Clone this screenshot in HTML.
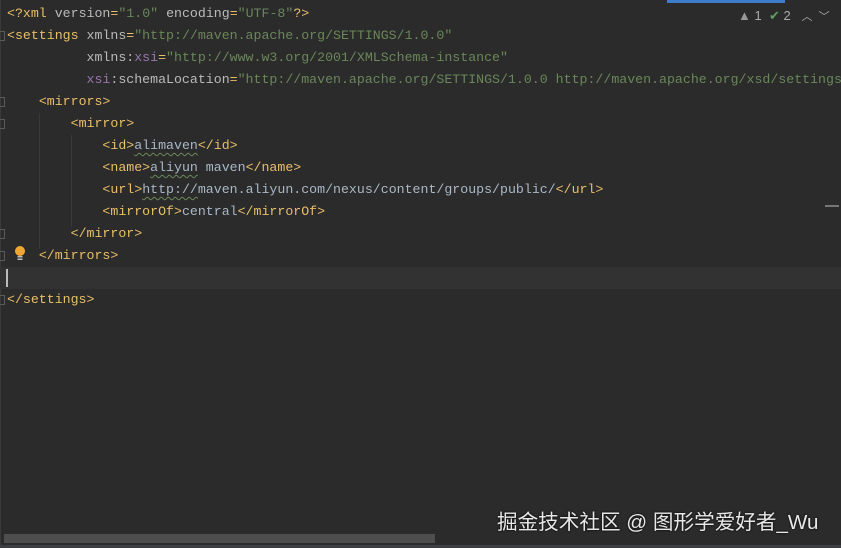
<!DOCTYPE html>
<html><head><meta charset="utf-8"><style>
html,body{margin:0;padding:0;background:#2b2b2b;width:841px;height:548px;overflow:hidden;position:relative}
.code{position:absolute;left:7px;top:3px;width:834px;overflow:hidden;font-family:"Liberation Mono",monospace;font-size:13.25px;line-height:22px;color:#a9b7c6;white-space:pre}
.t{color:#e8bf6a}.a{color:#bababa}.v{color:#6a8759}.n{color:#9876aa}
.w{text-decoration:underline wavy #6a8759;text-underline-offset:3px;text-decoration-thickness:1px}
.cur{position:absolute;left:0;top:267px;width:841px;height:22px;background:#323232}
.caret{position:absolute;left:6px;top:269px;width:2px;height:18px;background:#bbbbbb}
.guide{position:absolute;width:1px;background:#393939}
.fold{position:absolute;left:0;width:5px;height:10px;border:1px solid #5a5a5a;border-left:none;box-sizing:border-box}
</style></head><body>
<div style="position:absolute;left:0;top:0;width:1px;height:548px;background:#3a3a3a"></div>
<div class="cur"></div>
<div class="caret"></div>
<div class="guide" style="left:71px;top:135px;height:92px"></div>
<div class="guide" style="left:39px;top:113px;height:136px"></div>
<div class="fold" style="top:31px"></div>
<div class="fold" style="top:97px"></div>
<div class="fold" style="top:119px"></div>
<div class="fold" style="top:229px"></div>
<div class="fold" style="top:251px"></div>
<div class="fold" style="top:295px"></div>
<div class="code"><span class="t">&lt;?xml </span><span class="a">version</span><span class="t">=</span><span class="v">"1.0"</span> <span class="a">encoding</span><span class="t">=</span><span class="v">"UTF-8"</span><span class="t">?&gt;</span>
<span class="t">&lt;settings </span><span class="a">xmlns</span><span class="t">=</span><span class="v">"http://maven.apache.org/SETTINGS/1.0.0"</span>
          <span class="a">xmlns:</span><span class="n">xsi</span><span class="t">=</span><span class="v">"http://www.w3.org/2001/XMLSchema-instance"</span>
          <span class="n">xsi</span><span class="a">:schemaLocation</span><span class="t">=</span><span class="v">"http://maven.apache.org/SETTINGS/1.0.0 http://maven.apache.org/xsd/settings-1.0.0.xsd"</span><span class="t">&gt;</span>
    <span class="t">&lt;mirrors&gt;</span>
        <span class="t">&lt;mirror&gt;</span>
            <span class="t">&lt;id&gt;</span><span class="w">alimaven</span><span class="t">&lt;/id&gt;</span>
            <span class="t">&lt;name&gt;</span><span class="w">aliyun</span> maven<span class="t">&lt;/name&gt;</span>
            <span class="t">&lt;url&gt;</span><span class="w">http://</span>maven.aliyun.com/nexus/content/groups/public/<span class="t">&lt;/url&gt;</span>
            <span class="t">&lt;mirrorOf&gt;</span>central<span class="t">&lt;/mirrorOf&gt;</span>
        <span class="t">&lt;/mirror&gt;</span>
    <span class="t">&lt;/mirrors&gt;</span>

<span class="t">&lt;/settings&gt;</span></div>
<div style="position:absolute;left:733px;top:4px;width:108px;height:26px;background:#2b2b2b"></div>
<div style="position:absolute;left:667px;top:0;width:118px;height:3px;background:#3d7dcc"></div>
<div style="position:absolute;left:738px;top:8px;font-family:'Liberation Sans',sans-serif;font-size:13px;color:#aaa;white-space:nowrap">
<span style="color:#999">▲</span> 1&nbsp;&nbsp;<span style="color:#5fa15f">✔</span> 2&nbsp;&nbsp;&nbsp;<span style="font-size:11px">︿&nbsp;&nbsp;﹀</span></div>
<div style="position:absolute;left:825px;top:205px;width:14px;height:2px;background:#777"></div>
<svg style="position:absolute;left:13px;top:245px" width="14" height="16"><circle cx="7" cy="6" r="5" fill="#f0a732"/><rect x="4.5" y="11" width="5" height="1.5" fill="#bbb"/><rect x="4.5" y="13.5" width="5" height="1.5" fill="#bbb"/></svg>
<div style="position:absolute;left:497px;top:505px;font-family:'Liberation Sans','Noto Sans CJK SC',sans-serif;font-size:20.6px;color:#e8e8e8;white-space:nowrap;text-shadow:0 0 2px #000">掘金技术社区 @ 图形学爱好者_Wu</div>
<div style="position:absolute;left:4px;top:534px;width:431px;height:9px;background:#4e4e4e"></div>
<div style="position:absolute;left:0;top:545px;width:841px;height:3px;background:#3c3f41"></div>
</body></html>
